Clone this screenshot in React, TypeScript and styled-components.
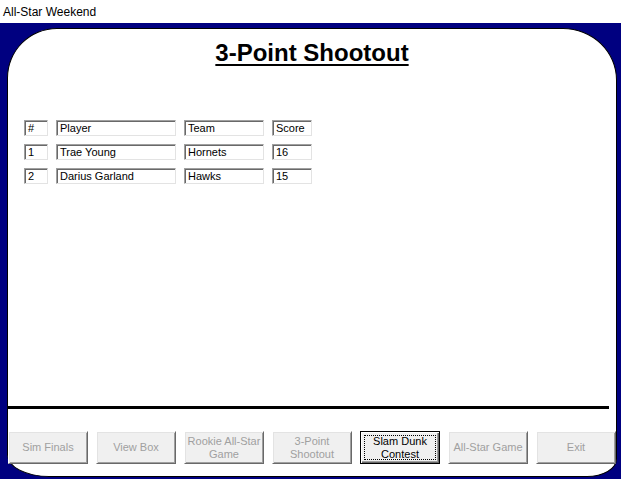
import { styled, createGlobalStyle } from 'styled-components';

const GlobalStyle = createGlobalStyle`
  html, body {
    margin: 0;
    padding: 0;
    background: #ffffff;
  }
  body {
    font-family: "Liberation Sans", Arial, sans-serif;
  }
`;

const Window = styled.div`
  display: flex;
  flex-direction: column;
  width: 621px;
  height: 479px;
  overflow: hidden;
`;

const TitleBar = styled.div`
  height: 23px;
  display: flex;
  align-items: center;
  padding-left: 3px;
  background: #ffffff;
  color: #000000;
  font-size: 12px;
`;

const Backdrop = styled.div`
  flex: 1;
  display: flex;
  background: #000080;
  padding: 5px 5px 2px 7px;
`;

const Panel = styled.div`
  flex: 1;
  display: flex;
  flex-direction: column;
  background: #ffffff;
  border: 1px solid #000000;
  border-radius: 50px 54px 30px 42px / 50px 52px 18px 22px;
  padding: 10px 0 12px 0;
`;

const Heading = styled.h1`
  margin: 0;
  text-align: center;
  font-size: 24px;
  line-height: 28px;
  font-weight: bold;
  text-decoration: underline;
  text-decoration-thickness: 2px;
  text-underline-offset: 3px;
  color: #000000;
`;

const Table = styled.div`
  display: flex;
  flex-direction: column;
  gap: 8px;
  margin: 53px 0 0 16px;
`;

const Row = styled.div`
  display: flex;
  gap: 8px;
  height: 16px;
`;

const Cell = styled.div<{ $w: number }>`
  box-sizing: border-box;
  width: ${(p) => p.$w}px;
  height: 16px;
  padding: 1px 0 0 3px;
  font-size: 11px;
  line-height: 13px;
  color: #000000;
  white-space: nowrap;
  overflow: hidden;
  border-top: 1px solid #a0a0a0;
  border-left: 1px solid #a0a0a0;
  border-right: 1px solid #e3e3e3;
  border-bottom: 1px solid #e3e3e3;
  box-shadow: inset 1px 1px 0 #696969;
`;

const Divider = styled.div`
  margin: auto 7px 0 0;
  height: 3px;
  background: #000000;
`;

const ButtonRow = styled.div`
  display: flex;
  gap: 8px;
  margin-top: 22px;
`;

const Button = styled.button<{ $active?: boolean }>`
  position: relative;
  box-sizing: border-box;
  width: 80px;
  height: 33px;
  padding: 0;
  margin: 0;
  display: flex;
  flex-direction: column;
  align-items: center;
  justify-content: center;
  background: #f0f0f0;
  font-family: "Liberation Sans", Arial, sans-serif;
  font-size: 11px;
  line-height: 13px;
  color: ${(p) => (p.$active ? '#000000' : '#a0a0a0')};
  border: 1px solid;
  border-color: ${(p) =>
    p.$active ? '#000000' : '#ffffff #696969 #696969 #ffffff'};
  box-shadow: ${(p) =>
    p.$active
      ? 'inset 1px 1px 0 #ffffff, inset -1px -1px 0 #696969, inset -2px -2px 0 #a0a0a0'
      : 'inset 1px 1px 0 #e3e3e3, inset -1px -1px 0 #a0a0a0'};
`;

const Focus = styled.span`
  position: absolute;
  inset: 3px;
  border: 1px dotted #000000;
`;

const columns = [24, 120, 80, 40];

const rows = [
  ['#', 'Player', 'Team', 'Score'],
  ['1', 'Trae Young', 'Hornets', '16'],
  ['2', 'Darius Garland', 'Hawks', '15'],
];

const buttons: { lines: string[]; active?: boolean }[] = [
  { lines: ['Sim Finals'] },
  { lines: ['View Box'] },
  { lines: ['Rookie All-Star', 'Game'] },
  { lines: ['3-Point', 'Shootout'] },
  { lines: ['Slam Dunk', 'Contest'], active: true },
  { lines: ['All-Star Game'] },
  { lines: ['Exit'] },
];

const App = () => (
  <>
    <GlobalStyle />
    <Window>
      <TitleBar>All-Star Weekend</TitleBar>
      <Backdrop>
        <Panel>
          <Heading>3-Point Shootout</Heading>
          <Table>
            {rows.map((r, i) => (
              <Row key={i}>
                {r.map((v, j) => (
                  <Cell key={j} $w={columns[j]}>
                    {v}
                  </Cell>
                ))}
              </Row>
            ))}
          </Table>
          <Divider />
          <ButtonRow>
            {buttons.map((b, i) => (
              <Button key={i} $active={b.active} disabled={!b.active}>
                {b.lines.map((l) => (
                  <span key={l}>{l}</span>
                ))}
                {b.active && <Focus />}
              </Button>
            ))}
          </ButtonRow>
        </Panel>
      </Backdrop>
    </Window>
  </>
);

export default App;
